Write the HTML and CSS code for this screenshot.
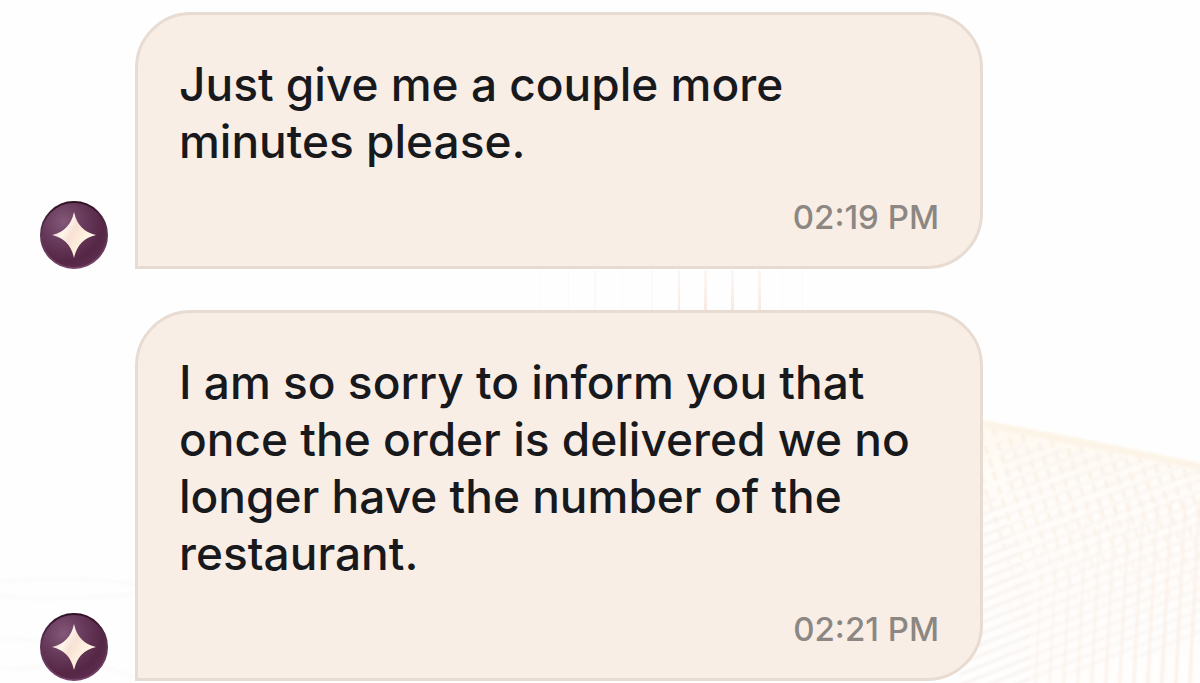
FILE: index.html
```
<!DOCTYPE html>
<html lang="en">
<head>
  <meta charset="UTF-8">
  <meta name="viewport" content="width=device-width, initial-scale=1">
  <title>Support chat</title>
  <link rel="stylesheet" href="styles.css">
</head>
<body>
  <svg class="backdrop" viewBox="0 0 1200 683" preserveAspectRatio="xMaxYMin slice" aria-hidden="true">
    <defs>
      <pattern id="steep" width="13" height="14" patternUnits="userSpaceOnUse" patternTransform="rotate(-18)">
        <path d="M6 0V9" stroke="#fbf0e3" stroke-width="3"/>
      </pattern>
      <pattern id="slant" width="20" height="10" patternUnits="userSpaceOnUse" patternTransform="rotate(-22)">
        <path d="M0 5H20" stroke="#f7f3f0" stroke-width="3"/>
      </pattern>
      <pattern id="upright" width="14" height="20" patternUnits="userSpaceOnUse" patternTransform="rotate(3)">
        <path d="M6 0V20" stroke="#faeee6" stroke-width="3"/>
      </pattern>
      <linearGradient id="ridge" x1="0" y1="0" x2="0" y2="1">
        <stop offset="0" stop-color="#fef8ef"/>
        <stop offset=".3" stop-color="#fffcf9"/>
        <stop offset="1" stop-color="#fffefd"/>
      </linearGradient>
      <linearGradient id="streak" x1="0" y1="0" x2="0" y2="1">
        <stop offset="0" stop-color="#f8eae2" stop-opacity=".3"/>
        <stop offset="1" stop-color="#f7e9e1"/>
      </linearGradient>
      <linearGradient id="fadeOut" x1="0" y1="416" x2="0" y2="640" gradientUnits="userSpaceOnUse">
        <stop offset=".4" stop-color="#fff"/>
        <stop offset="1" stop-color="#000"/>
      </linearGradient>
      <linearGradient id="fadeIn" x1="0" y1="510" x2="60" y2="660" gradientUnits="userSpaceOnUse">
        <stop offset="0" stop-color="#000"/>
        <stop offset="1" stop-color="#fff"/>
      </linearGradient>
      <linearGradient id="fadeRight" x1="1020" y1="520" x2="1180" y2="660" gradientUnits="userSpaceOnUse">
        <stop offset="0" stop-color="#000"/>
        <stop offset="1" stop-color="#fff"/>
      </linearGradient>
      <mask id="upper" maskUnits="userSpaceOnUse" x="960" y="400" width="260" height="300">
        <rect x="960" y="400" width="260" height="300" fill="url(#fadeOut)"/>
      </mask>
      <mask id="lower" maskUnits="userSpaceOnUse" x="960" y="400" width="260" height="300">
        <rect x="960" y="400" width="260" height="300" fill="url(#fadeRight)"/>
      </mask>
      <filter id="soft">
        <feGaussianBlur stdDeviation="1"/>
      </filter>
    </defs>
    <!-- hill on the right -->
    <g filter="url(#soft)">
      <path d="M960 416Q1080 437 1210 465V693H960Z" fill="url(#ridge)"/>
      <path d="M960 416Q1080 437 1210 465V693H1030Z" fill="url(#steep)" mask="url(#upper)"/>
      <path d="M960 480L1000 500L1030 590V693H960Z" fill="url(#slant)"/>
      <path d="M1000 440L1210 470V640L1030 683Z" fill="url(#slant)" opacity=".6"/>
      <path d="M1030 500H1210V693H1030Z" fill="url(#upright)" mask="url(#lower)"/>
      <path d="M960 420Q1080 441 1210 469" fill="none" stroke="#fdf4e8" stroke-width="7"/>
    </g>
    <!-- streaks between the bubbles -->
    <path d="M540 270h1v42h-1zM568 270h1v42h-1zM594 270h2v42h-2zM622 270h1v42h-1zM651 270h2v42h-2z" fill="#fbfafa"/>
    <path d="M678 270h2v42h-2zM704 270h3v42h-3zM731 270h3v42h-3zM758 270h3v42h-3z" fill="url(#streak)"/>
    <path d="M782 270h1v42h-1zM802 270h1v42h-1z" fill="#fcfaf9"/>
    <!-- faint ripples, bottom left -->
    <path d="M0 582Q60 574 135 584M0 596Q50 602 135 594M0 640Q20 636 40 642M0 667Q20 672 50 664T135 677" fill="none" stroke="#fcfbfa" stroke-width="4" filter="url(#soft)"/>
  </svg>

  <svg class="sprite" aria-hidden="true">
    <defs>
      <radialGradient id="orb" cx=".34" cy=".3" r=".75">
        <stop offset="0" stop-color="#835777"/>
        <stop offset=".45" stop-color="#66395a"/>
        <stop offset=".8" stop-color="#562645"/>
        <stop offset="1" stop-color="#5c2d50"/>
      </radialGradient>
      <linearGradient id="rim" x1="0" y1="0" x2="0" y2="1">
        <stop offset="0" stop-color="#301024"/>
        <stop offset=".4" stop-color="#58304f"/>
        <stop offset="1" stop-color="#76456a"/>
      </linearGradient>
      <linearGradient id="shine" x1="0" y1=".2" x2="1" y2=".8">
        <stop offset="0" stop-color="#cdb2ad"/>
        <stop offset=".28" stop-color="#fff5ed"/>
        <stop offset=".45" stop-color="#f8e1d5"/>
        <stop offset=".7" stop-color="#fff1df"/>
        <stop offset="1" stop-color="#fffdf5"/>
      </linearGradient>
      <symbol id="agent" viewBox="0 0 68 68">
        <circle cx="34" cy="34" r="33" fill="url(#orb)" stroke="url(#rim)" stroke-width="2"/>
        <path d="M34 11Q38 30 56 34Q38 38 34 57Q30 38 12 34Q30 30 34 11Z" fill="url(#shine)"/>
      </symbol>
    </defs>
  </svg>

  <main class="chat">
    <div class="message">
      <svg class="avatar" role="img" aria-label="Support agent"><use href="#agent"/></svg>
      <div class="bubble">
        <p class="text">Just give me a couple more minutes please.</p>
        <time class="time" datetime="14:19">02:19 PM</time>
      </div>
    </div>
    <div class="message">
      <svg class="avatar" role="img" aria-label="Support agent"><use href="#agent"/></svg>
      <div class="bubble">
        <p class="text">I am so sorry to inform you that once the order is delivered we no longer have the number of the restaurant.</p>
        <time class="time" datetime="14:21">02:21 PM</time>
      </div>
    </div>
  </main>
</body>
</html>
```
FILE: styles.css
```
* {
  box-sizing: border-box;
}
body {
  margin: 0;
  position: relative;
  background-color: #fefefe;
  color: #17191c;
  font-family: Inter, "Liberation Sans", sans-serif;
  font-weight: 500;
}
.backdrop {
  position: absolute;
  top: 0;
  left: 0;
  width: 100%;
  height: 100%;
}
.sprite {
  position: absolute;
  width: 0;
  height: 0;
}
.chat {
  position: relative;
  display: flex;
  flex-direction: column;
  gap: 41px;
  padding: 12px 40px 2px;
}
.message {
  display: flex;
  align-items: flex-end;
  gap: 27px;
}
.avatar {
  flex: none;
  width: 68px;
  height: 68px;
}
.bubble {
  flex: 1;
  max-width: 848px;
  padding: 41px 41px 27px;
  background-color: #f9eee6;
  border: 3px solid #e8dcd2;
  border-radius: 56px 56px 56px 0;
}
.text {
  margin: 0 0 25px;
  font-size: 46px;
  line-height: 57px;
}
.time {
  display: block;
  text-align: right;
  color: #8c8782;
  font-size: 33px;
  line-height: 44px;
}
```
